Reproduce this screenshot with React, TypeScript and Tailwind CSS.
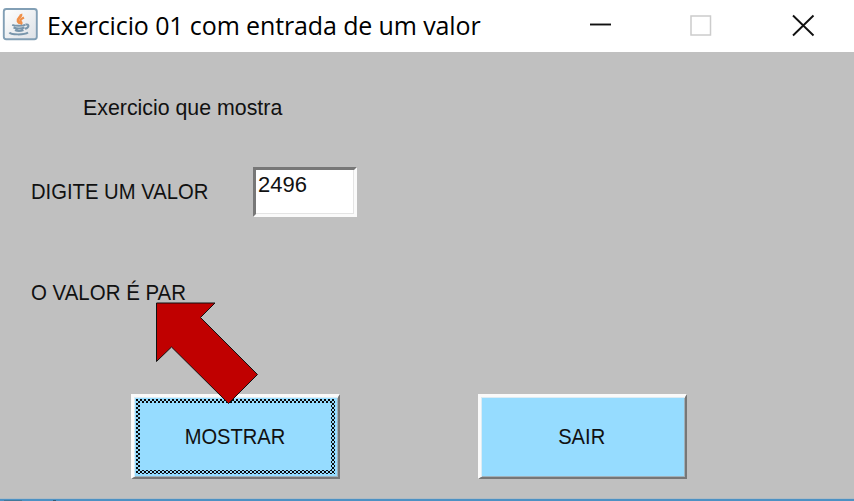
import type { ReactNode } from "react";

function JavaIcon() {
  return (
    <svg width="39" height="49" viewBox="0 0 39 49" className="shrink-0" fill="none">
      <defs>
        <linearGradient id="tile" x1="0" y1="0" x2="1" y2="1">
          <stop offset="0" stopColor="#fff" />
          <stop offset="1" stopColor="#dde1e6" />
        </linearGradient>
      </defs>
      <rect x="3.800" y="9" width="33" height="30.300" rx="2.500" fill="url(#tile)" stroke="#829fb5" strokeWidth="1.900" />
      <path d="M21 14c1 3-4 4-3 7 .4 1.200 2 2 2 3" stroke="#f08f48" strokeWidth="2.800" />
      <path d="M24 17.500c-3 1.500-4.500 2.700-3 4.300 1 1 .5 1.800-.5 2.600" stroke="#f08f48" strokeWidth="2.200" />
      <path d="M12.200 24.800c3 1.400 10 1.400 13 0M13.500 27.500c3 1.200 8 1.200 11 0M15 30c2 1 6 1 8.500 0M25.500 24.500c4-.8 4 3-.5 4.300M9.500 32.500c1 2.400 15 2.600 18.500 0" stroke="#7895ab" strokeWidth="2" />
    </svg>
  );
}

function AwtButton({ children, focused = false }: { children: ReactNode; focused?: boolean }) {
  return (
    <button className="relative h-[85px] w-[209px] border-[2px] border-t-[3px] border-l-[3px] border-t-[#fafafa] border-l-[#fafafa] border-r-[#777] border-b-[#777] bg-[#96dcff] text-[22px] leading-6 shadow-[inset_1px_1px_0_#dcecf4,inset_-1px_-1px_0_#a0b1ba]">
      {focused && (
        <svg className="absolute top-[2px] left-[2px]" width="200" height="76" fill="none">
          <defs>
            <pattern id="dots" width="4" height="4" patternUnits="userSpaceOnUse">
              <path d="M0 0h2v2H0zM2 2h2v2H2z" fill="#0a0a0a" />
            </pattern>
          </defs>
          <rect x="2" y="2" width="195" height="71" stroke="url(#dots)" strokeWidth="4" />
        </svg>
      )}
      <span className="mr-[2px] inline-block scale-x-[.915]">{children}</span>
    </button>
  );
}

export default function App() {
  return (
    <div className="flex h-[501px] w-[854px] flex-col overflow-hidden bg-[#c0c0c0] font-['Liberation_Sans',Arial,sans-serif] text-[22px] leading-6 whitespace-nowrap text-[#111]">
      <header className="flex h-[52px] shrink-0 items-center bg-white pb-[3px]">
        <JavaIcon />
        <h1 className="ml-[8px] w-[540px] pt-px font-['Open_Sans','Noto_Sans',sans-serif] text-[25px] leading-8 tracking-[-0.12px] text-black">
          Exercicio 01 com entrada de um valor
        </h1>
        <svg width="230" height="24" viewBox="587 12 230 24" fill="none" className="shrink-0">
          <path d="M590 23.500h21" stroke="#111" strokeWidth="1.900" />
          <rect x="691" y="15" width="19.500" height="19" stroke="#ccc" strokeWidth="1.500" />
          <path d="m793 14.500 20.500 20M813.500 14.500 793 34.500" stroke="#111" strokeWidth="1.900" />
        </svg>
      </header>
      <main className="relative flex h-[446px] shrink-0 flex-col pt-[44px]">
        <p className="ml-[82.5px]">
          <span className="inline-block origin-left scale-x-[.97]">Exercicio que mostra</span>
        </p>
        <div className="mt-[47px] flex h-[50px] items-start">
          <label className="w-[253px] shrink-0 pt-[13px] pl-[30.5px]">
            <span className="inline-block origin-left scale-x-[.92]">DIGITE UM VALOR</span>
          </label>
          <div className="h-[50px] w-[104px] border-[3px] border-t-[#777] border-l-[#777] border-r-[#fafafa] border-b-[#fafafa] bg-white pt-[3px] pl-[2px] shadow-[inset_-1px_-1px_0_#e4e4e4]">
            2496
          </div>
        </div>
        <p className="mt-[64px] ml-[30.5px]">
          <span className="inline-block origin-left scale-x-[.93]">O VALOR É PAR</span>
        </p>
        <div className="mt-[89px] ml-[131px] flex gap-[138px]">
          <AwtButton focused>MOSTRAR</AwtButton>
          <AwtButton>SAIR</AwtButton>
        </div>
        <svg className="absolute top-[248px] left-[152px]" width="112" height="160" viewBox="152 300 112 160">
          <path d="M156.500 303H215l-14.500 14.500 57 57L228.500 403.500 171.500 347 156.500 361.500Z" fill="#c00000" stroke="#111" />
        </svg>
      </main>
      <footer className="flex h-[3px] shrink-0 border-t border-[#aebbc4] bg-[#4d91c3]">
        <span className="mt-px ml-[4px] h-px w-[18px] bg-[#427899]" />
        <span className="mt-px ml-[31px] h-px w-[3px] bg-[#315c77]" />
      </footer>
    </div>
  );
}
